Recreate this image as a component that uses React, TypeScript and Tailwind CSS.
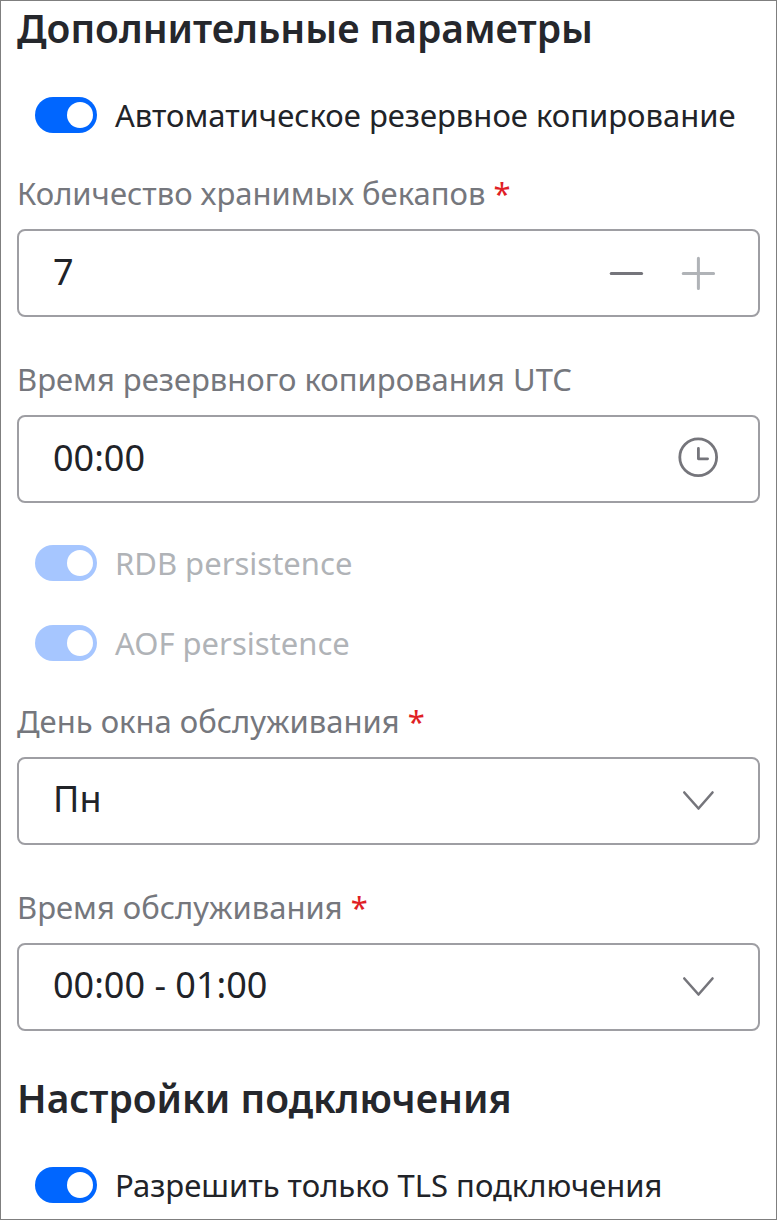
import { useState } from "react";
import type { ReactNode } from "react";

const boxClass =
  "flex items-center w-full h-[88px] border-2 rounded-lg border-[#9e9ea3] bg-white focus-within:border-[#0066ff]";
const valueClass =
  "w-full h-full pl-[34px] pb-1 bg-transparent text-[36px] text-[#212328] focus:outline-none";

function Heading({ children }: { children: ReactNode }) {
  return <h2 className="pb-1 font-semibold text-[39px] leading-[46px] text-[#25272c]">{children}</h2>;
}

function Toggle({ id, label, disabled = false }: { id: string; label: string; disabled?: boolean }) {
  const [checked, setChecked] = useState(true);
  return (
    <div className="flex items-center gap-[18px] pl-[18px] h-10">
      <span className="relative shrink-0 w-[62px] h-9">
        <input
          id={id}
          type="checkbox"
          role="switch"
          checked={checked}
          disabled={disabled}
          onChange={() => setChecked(!checked)}
          className="block w-full h-full appearance-none rounded-full cursor-pointer bg-[#9e9ea3] checked:bg-[#0066ff] disabled:checked:bg-[#a6c6ff] disabled:cursor-default peer"
        />
        <span className="absolute top-[5px] left-1 peer-checked:left-8 w-[26px] h-[26px] rounded-full bg-white pointer-events-none" />
      </span>
      <label
        htmlFor={id}
        className={disabled ? "text-[31px] leading-10 text-[#b0b3b7]" : "text-[31px] leading-10 text-[#212328]"}
      >
        {label}
      </label>
    </div>
  );
}

function Field({
  id,
  label,
  required = false,
  children,
}: {
  id: string;
  label: string;
  required?: boolean;
  children: ReactNode;
}) {
  return (
    <div>
      <label htmlFor={id} className="block mb-[18px] text-[31px] leading-9 text-[#75777d]">
        {label}
        {required && <span className="text-[#e01f26]"> *</span>}
      </label>
      {children}
    </div>
  );
}

function SelectBox({ id, options }: { id: string; options: string[] }) {
  return (
    <div className={`relative ${boxClass}`}>
      <select id={id} className={`${valueClass} appearance-none cursor-pointer`}>
        {options.map((option) => (
          <option key={option}>{option}</option>
        ))}
      </select>
      <svg
        viewBox="0 0 40 40"
        className="absolute right-10 w-10 h-10 pointer-events-none fill-none stroke-[#75757b]"
        strokeWidth="2.6"
        strokeLinecap="round"
        strokeLinejoin="round"
      >
        <path d="M6.3 11.5l14.2 16 14-16" />
      </svg>
    </div>
  );
}

export default function App() {
  const [count, setCount] = useState(7);
  const [time, setTime] = useState("00:00");
  return (
    <form className="min-h-screen px-4 pt-1 border border-[#7f7f7f] bg-white font-['Noto_Sans',sans-serif]">
      <section className="flex flex-col gap-10">
        <Heading>Дополнительные параметры</Heading>
        <Toggle id="backup" label="Автоматическое резервное копирование" />
        <div className="flex flex-col gap-11">
          <Field id="count" label="Количество хранимых бекапов" required>
            <div className={boxClass}>
              <input
                id="count"
                inputMode="numeric"
                value={count}
                onChange={(e) => setCount(Number(e.target.value) || 0)}
                className={valueClass}
              />
              <div className="flex gap-8 pr-10">
                <button type="button" aria-label="Уменьшить" onClick={() => setCount(Math.max(0, count - 1))}>
                  <svg viewBox="0 0 40 40" className="w-10 h-10 stroke-[#75757b]" strokeWidth="3" strokeLinecap="round">
                    <path d="M5.2 20.4h30.4" />
                  </svg>
                </button>
                <button type="button" aria-label="Увеличить" disabled={count >= 7} onClick={() => setCount(count + 1)}>
                  <svg viewBox="0 0 40 40" className="w-10 h-10 stroke-[#b0b3b7]" strokeWidth="3" strokeLinecap="round">
                    <path d="M5.2 20.4h30.4M20.4 5.2v30.4" />
                  </svg>
                </button>
              </div>
            </div>
          </Field>
          <Field id="time" label="Время резервного копирования UTC">
            <div className={boxClass}>
              <input id="time" value={time} onChange={(e) => setTime(e.target.value)} className={valueClass} />
              <svg
                viewBox="0 0 40 40"
                className="shrink-0 w-10 h-10 mr-10 mb-1 fill-none stroke-[#75757b]"
                strokeWidth="2.8"
                strokeLinecap="round"
                strokeLinejoin="round"
              >
                <circle cx="20.2" cy="20.2" r="18.4" />
                <path d="M20.4 11.4v10.4h9.2" />
              </svg>
            </div>
          </Field>
        </div>
        <Toggle id="rdb" label="RDB persistence" disabled />
        <Toggle id="aof" label="AOF persistence" disabled />
        <div className="flex flex-col gap-11">
          <Field id="day" label="День окна обслуживания" required>
            <SelectBox id="day" options={["Пн", "Вт", "Ср", "Чт", "Пт", "Сб", "Вс"]} />
          </Field>
          <Field id="window" label="Время обслуживания" required>
            <SelectBox id="window" options={["00:00 - 01:00", "01:00 - 02:00", "02:00 - 03:00"]} />
          </Field>
        </div>
      </section>
      <section className="flex flex-col gap-10 mt-11">
        <Heading>Настройки подключения</Heading>
        <Toggle id="tls" label="Разрешить только TLS подключения" />
      </section>
    </form>
  );
}
